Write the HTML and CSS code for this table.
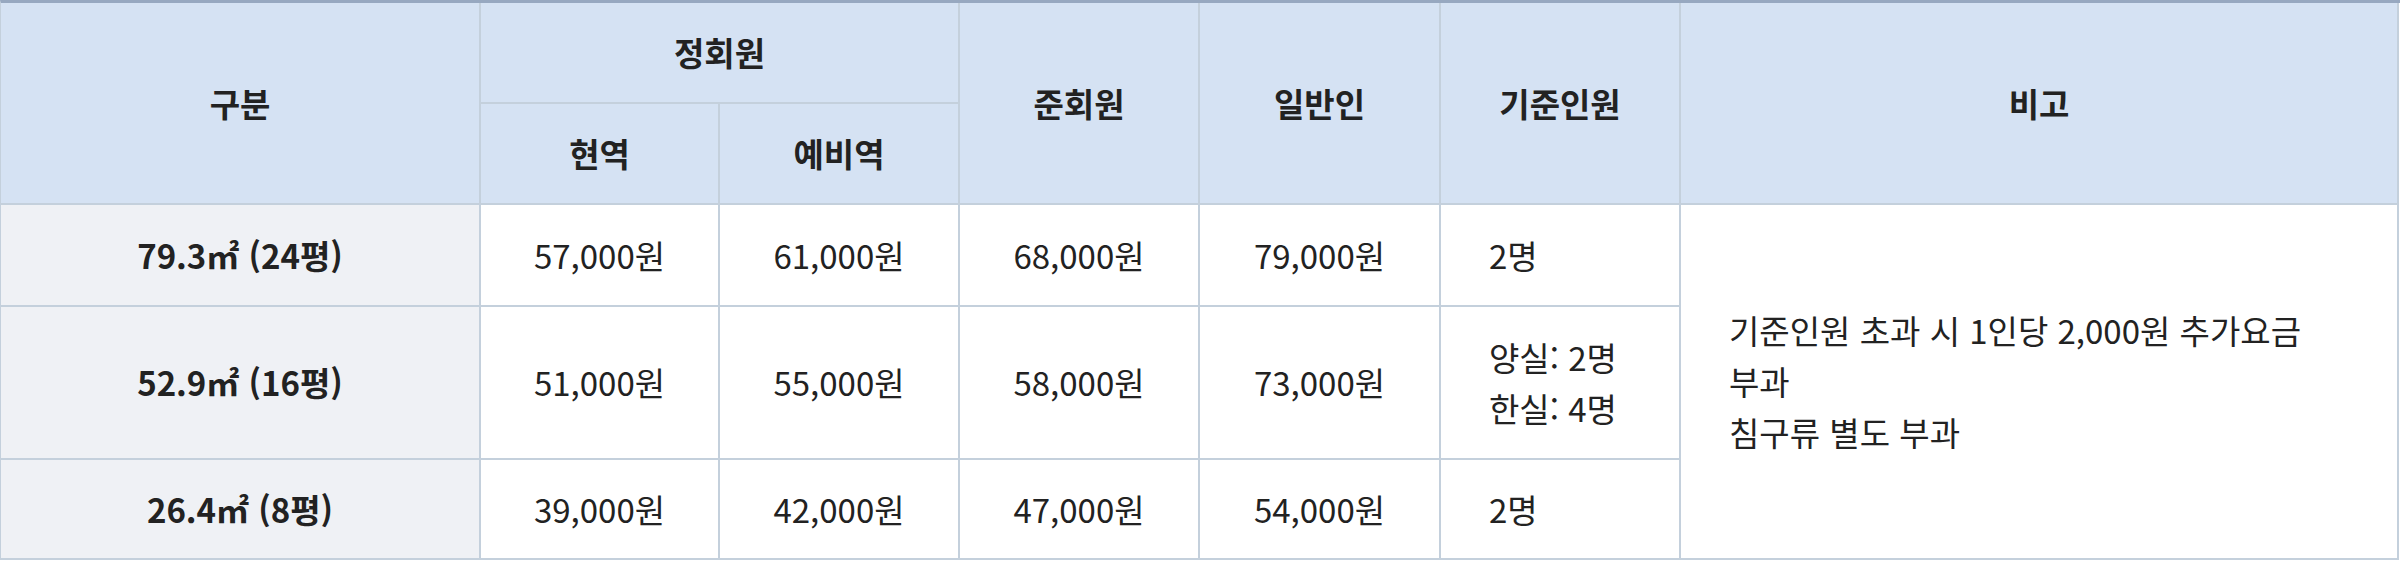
FILE: index.html
```html
<!DOCTYPE html>
<html lang="ko">
<head>
<meta charset="utf-8">
<title>요금표</title>
<link rel="stylesheet" href="styles.css">
</head>
<body>
<div class="price-table" role="table">
  <div class="cell head r1 c1 span-r2" role="columnheader">구분</div>
  <div class="cell head r1 c2 span-c2" role="columnheader">정회원</div>
  <div class="cell head r1 c4 span-r2" role="columnheader">준회원</div>
  <div class="cell head r1 c5 span-r2" role="columnheader">일반인</div>
  <div class="cell head r1 c6 span-r2" role="columnheader">기준인원</div>
  <div class="cell head r1 c7 span-r2" role="columnheader">비고</div>
  <div class="cell head r2 c2" role="columnheader">현역</div>
  <div class="cell head r2 c3" role="columnheader">예비역</div>

  <div class="cell label r3 c1">79.3㎡ (24평)</div>
  <div class="cell r3 c2">57,000원</div>
  <div class="cell r3 c3">61,000원</div>
  <div class="cell r3 c4">68,000원</div>
  <div class="cell r3 c5">79,000원</div>
  <div class="cell left r3 c6">2명</div>
  <div class="cell note r3 c7 span-r3"><p class="note-text">기준인원 초과 시 1인당 2,000원 추가요금 부과<br>침구류 별도 부과</p></div>

  <div class="cell label r4 c1">52.9㎡ (16평)</div>
  <div class="cell r4 c2">51,000원</div>
  <div class="cell r4 c3">55,000원</div>
  <div class="cell r4 c4">58,000원</div>
  <div class="cell r4 c5">73,000원</div>
  <div class="cell left r4 c6"><p class="multi">양실: 2명<br>한실: 4명</p></div>

  <div class="cell label r5 c1">26.4㎡ (8평)</div>
  <div class="cell r5 c2">39,000원</div>
  <div class="cell r5 c3">42,000원</div>
  <div class="cell r5 c4">47,000원</div>
  <div class="cell r5 c5">54,000원</div>
  <div class="cell left r5 c6">2명</div>
</div>
</body>
</html>
```

FILE: styles.css
```css
html, body {
  margin: 0;
  padding: 0;
  background: #ffffff;
}

body {
  font-family: "Noto Sans CJK KR", "Noto Sans", sans-serif;
  font-size: 33px;
  line-height: 51px;
  color: #222222;
}

.price-table {
  display: grid;
  width: 2399px;
  grid-template-columns: 480px 239px 240px 240px 241px 240px 718px;
  grid-template-rows: 101px 101px 102px 153px 100px;
  border-top: 3px solid #97a8c0;
  border-left: 1px solid #c4d0dc;
}

.cell {
  box-sizing: border-box;
  display: flex;
  align-items: center;
  justify-content: center;
  border-right: 2px solid #c4d0dc;
  border-bottom: 2px solid #c4d0dc;
  background: #ffffff;
  white-space: nowrap;
}

.head {
  background: #d5e2f3;
  font-weight: 700;
}

.label {
  background: #eff1f5;
  font-weight: 700;
}

.left {
  justify-content: flex-start;
  padding-left: 48px;
}

.note {
  justify-content: flex-start;
  padding: 0 48px;
  white-space: normal;
  word-break: keep-all;
}

.note-text,
.multi {
  margin: 0;
}

.note-text {
  width: 600px;
}

.r1 { grid-row: 1; }
.r2 { grid-row: 2; }
.r3 { grid-row: 3; }
.r4 { grid-row: 4; }
.r5 { grid-row: 5; }

.c1 { grid-column: 1; }
.c2 { grid-column: 2; }
.c3 { grid-column: 3; }
.c4 { grid-column: 4; }
.c5 { grid-column: 5; }
.c6 { grid-column: 6; }
.c7 { grid-column: 7; }

.span-r2 { grid-row-end: span 2; }
.span-r3 { grid-row-end: span 3; }
.span-c2 { grid-column-end: span 2; }
```
